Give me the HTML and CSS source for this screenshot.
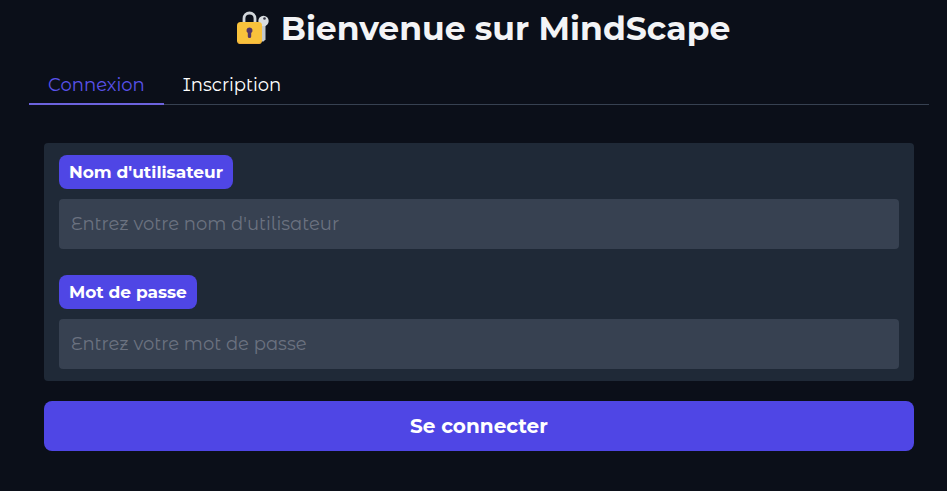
FILE: index.html
```html
<!DOCTYPE html>
<html lang="fr">
<head>
<meta charset="utf-8">
<meta name="viewport" content="width=device-width, initial-scale=1">
<title>MindScape</title>
<link rel="stylesheet" href="styles.css">
</head>
<body>
<main class="page">
  <h1 class="title">
    <svg class="title-icon" viewBox="0 0 34 36" aria-hidden="true">
      <path d="M24 14v15.500q0 2 1.500 2h2l2-2v-15.500z" fill="#c4c9cd"/>
      <circle cx="27.500" cy="11" r="5.200" fill="#d9dde0"/>
      <circle cx="28.500" cy="8.500" r="1.300" fill="#343442"/>
      <path d="M8 17V8.500a5.500 5.500 0 0 1 11 0V17" fill="none" stroke="#d2d6da" stroke-width="2.800"/>
      <rect x="1" y="12" width="25" height="22" rx="3.500" fill="#f9c23c"/>
      <path d="M2 31q0 2.500 3 2.500h17q3 0 3-2.500" fill="none" stroke="#f3af3d" stroke-width="1"/>
      <path d="M13.500 17.500a3 3 0 0 0-1.700 5.500v3.500q0 1.500 1.700 1.500t1.700-1.500v-3.500a3 3 0 0 0-1.700-5.500z" fill="#533566"/>
    </svg>
    <span>Bienvenue sur MindScape</span>
  </h1>
  <nav class="tabs">
    <button type="button" class="tab tab-active">Connexion</button>
    <button type="button" class="tab">Inscription</button>
  </nav>
  <form class="form">
    <div class="card">
      <div class="field">
        <label class="label" for="user">Nom d'utilisateur</label>
        <input class="input" id="user" type="text" placeholder="Entrez votre nom d'utilisateur">
      </div>
      <div class="field">
        <label class="label" for="pass">Mot de passe</label>
        <input class="input" id="pass" type="password" placeholder="Entrez votre mot de passe">
      </div>
    </div>
    <button class="submit" type="submit">Se connecter</button>
  </form>
</main>
</body>
</html>
```
FILE: styles.css
```css
* { box-sizing: border-box; }

body {
  margin: 0;
  background: #0b0f19;
  color: #f3f4f6;
  font-family: Montserrat, Inter, sans-serif;
  font-size: 18px;
}

button, input { font: inherit; }

.page { padding: 8px 18px 40px 29px; }

.title {
  display: flex;
  justify-content: center;
  align-items: center;
  gap: 11px;
  margin: 0 0 18px;
  padding-left: 8px;
  font-size: 33px;
  line-height: 40px;
  font-weight: 700;
}

.title-icon { width: 34px; height: 36px; }

.tabs {
  display: flex;
  border-bottom: 1px solid #374151;
}

.tab {
  margin-bottom: -1px;
  padding: 0 19px;
  height: 39px;
  border: 0;
  border-bottom: 2px solid transparent;
  background: none;
  color: #fff;
}

.tab,
.input { font-family: "Montserrat Alternates", Montserrat, Inter, sans-serif; }

.tab-active {
  color: #5a52ea;
  border-bottom-color: #6c63dd;
}

.form { padding: 38px 15px 0; }

.card {
  display: flex;
  flex-direction: column;
  gap: 26px;
  padding: 12px 15px;
  border-radius: 4px;
  background: #1f2937;
}

.field {
  display: flex;
  flex-direction: column;
  align-items: flex-start;
  gap: 10px;
}

.label {
  padding: 5px 10px;
  border-radius: 8px;
  background: #4f46e5;
  color: #fff;
  font-size: 17px;
  font-weight: 700;
  line-height: 24px;
}

.input {
  width: 100%;
  height: 50px;
  padding: 0 12px;
  border: 0;
  border-radius: 4px;
  background: #374151;
  color: #f3f4f6;
}

.input::placeholder { color: #6b7280; opacity: 1; }

.submit {
  width: 100%;
  height: 50px;
  margin-top: 20px;
  border: 0;
  border-radius: 8px;
  background: #4f46e5;
  color: #fff;
  font-size: 20px;
  font-weight: 700;
}
```
